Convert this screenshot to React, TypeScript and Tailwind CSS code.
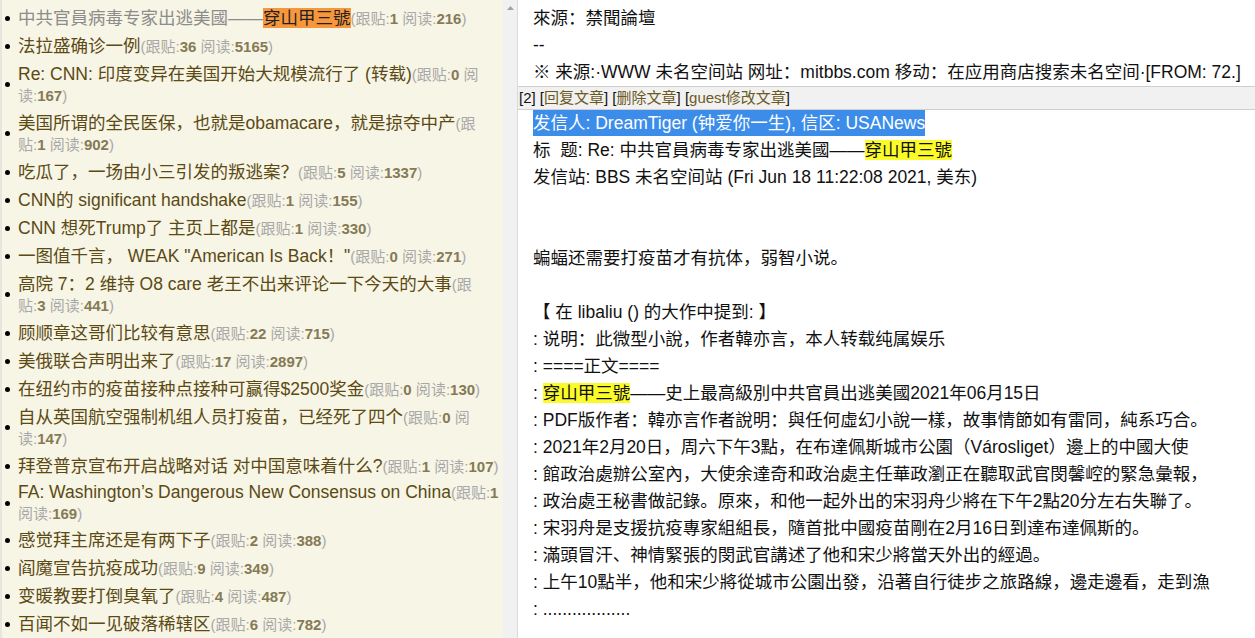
import React from "react";

type Brk = "none" | "gen" | "yue" | "num";
type Item = { title: React.ReactNode; a: string; b: string; brk?: Brk; visited?: boolean; tight?: boolean };

const items: Item[] = [
  {
    title: (
      <>
        中共官員病毒专家出逃美國——<span className="bg-[#f8963c] text-[#222]">穿山甲三號</span>
      </>
    ),
    a: "1",
    b: "216",
    visited: true,
  },
  { title: "法拉盛确诊一例", a: "36", b: "5165" },
  { title: "Re: CNN: 印度变异在美国开始大规模流行了 (转载)", a: "0", b: "167", brk: "yue" },
  { title: "美国所谓的全民医保，也就是obamacare，就是掠夺中产", a: "1", b: "902", brk: "gen" },
  { title: "吃瓜了，一场由小三引发的叛逃案？", a: "5", b: "1337" },
  { title: "CNN的 significant handshake", a: "1", b: "155" },
  { title: "CNN 想死Trump了 主页上都是", a: "1", b: "330" },
  { title: "一图值千言， WEAK \"American Is Back！\"", a: "0", b: "271" },
  { title: "高院 7：2 维持 O8 care 老王不出来评论一下今天的大事", a: "3", b: "441", brk: "gen" },
  { title: "顾顺章这哥们比较有意思", a: "22", b: "715" },
  { title: "美俄联合声明出来了", a: "17", b: "2897" },
  { title: "在纽约市的疫苗接种点接种可赢得$2500奖金", a: "0", b: "130" },
  { title: "自从英国航空强制机组人员打疫苗，已经死了四个", a: "0", b: "147", brk: "yue" },
  { title: "拜登普京宣布开启战略对话 对中国意味着什么?", a: "1", b: "107" },
  { title: "FA: Washington’s Dangerous New Consensus on China", a: "1", b: "169", brk: "num", tight: true },
  { title: "感觉拜主席还是有两下子", a: "2", b: "388" },
  { title: "阎魔宣告抗疫成功", a: "9", b: "349" },
  { title: "变暖教要打倒臭氧了", a: "4", b: "487" },
  { title: "百闻不如一见破落稀辖区", a: "6", b: "782" },
];

function Meta({ a, b, brk = "none" }: { a: string; b: string; brk?: Brk }) {
  const num = "font-bold text-[#857a55]";
  return (
    <span className="text-[15px] text-[#a8a8a8]">
      (跟{brk === "gen" && <br />}贴:<span className={num}>{a}</span>
      {brk === "num" ? <br /> : " "}阅{brk === "yue" && <br />}读:<span className={num}>{b}</span>)
    </span>
  );
}

const HL = ({ children }: { children: React.ReactNode }) => (
  <span className="bg-[#fbfb2a]">{children}</span>
);

const bodyLines: React.ReactNode[] = [
  "",
  "",
  "蝙蝠还需要打疫苗才有抗体，弱智小说。",
  "",
  "【 在 libaliu () 的大作中提到: 】",
  ": 说明：此微型小說，作者韓亦言，本人转载纯属娱乐",
  ": ====正文====",
  <>
    : <HL>穿山甲三號</HL>——史上最高級別中共官員出逃美國2021年06月15日
  </>,
  ": PDF版作者：韓亦言作者說明：與任何虛幻小說一樣，故事情節如有雷同，純系巧合。",
  ": 2021年2月20日，周六下午3點，在布達佩斯城市公園（Városliget）邊上的中國大使",
  ": 館政治處辦公室內，大使余達奇和政治處主任華政瀏正在聽取武官閔馨崆的緊急彙報，",
  ": 政治處王秘書做記錄。原來，和他一起外出的宋羽舟少將在下午2點20分左右失聯了。",
  ": 宋羽舟是支援抗疫專家組組長，隨首批中國疫苗剛在2月16日到達布達佩斯的。",
  ": 滿頭冒汗、神情緊張的閔武官講述了他和宋少將當天外出的經過。",
  ": 上午10點半，他和宋少將從城市公園出發，沿著自行徒步之旅路線，邊走邊看，走到漁",
  ": ..................",
];

export default function App() {
  return (
    <div
      className="flex h-[638px] w-[1255px] overflow-hidden bg-white"
      style={{ fontFamily: '"Liberation Sans", Arial, "Noto Sans CJK SC", sans-serif' }}
    >
      {/* Left list panel */}
      <div className="flex h-full w-[517px] shrink-0">
        <div className="h-full w-[503px] overflow-hidden border-l-2 border-[#e7e6dc] bg-[#f7f5e6] pt-[4px]">
          <ul>
            {items.map((it, i) => (
              <li key={i} className={`flex items-center ${it.tight ? "py-[2px]" : "py-[3.5px]"}`}>
                <span className="ml-[3px] mr-[8px] h-[5px] w-[5px] shrink-0 rounded-full bg-black" />
                <div
                  className={`whitespace-nowrap text-[17.5px] leading-[21px] ${
                    it.visited ? "text-[#8c8c8c]" : "text-[#5b4a14]"
                  }`}
                >
                  {it.title}
                  <Meta a={it.a} b={it.b} brk={it.brk} />
                </div>
              </li>
            ))}
          </ul>
        </div>
        {/* scrollbar */}
        <div className="flex h-full w-[14px] flex-col items-center bg-[#f1f1f1] pt-[6px]">
          <svg width="7" height="4" viewBox="0 0 7 4">
            <path d="M0 4 L3.5 0 L7 4 Z" fill="#a3a3a3" />
          </svg>
        </div>
      </div>

      {/* Right article panel */}
      <div className="h-full flex-1 overflow-hidden border-l border-[#dadada] text-[17.5px] leading-[27px] text-[#111]">
        <div className="whitespace-pre pl-[15px] pt-[5px]">
          <div>來源：禁聞論壇</div>
          <div>--</div>
          <div>※ 来源:·WWW 未名空间站 网址：mitbbs.com 移动：在应用商店搜索未名空间·[FROM: 72.]</div>
        </div>
        <div className="h-[24px] whitespace-nowrap border-y border-[#cfcfcf] bg-[#f1f1f1] pl-[1px] text-[15px] leading-[22px] text-[#111]">
          [2] [<span className="text-[#6b5a1e]">回复文章</span>] [
          <span className="text-[#6b5a1e]">删除文章</span>] [
          <span className="text-[#6b5a1e]">guest修改文章</span>]
        </div>
        <div className="whitespace-pre pl-[15px]">
          <div className="h-[27px]">
            <span className="inline-block h-[26px] bg-[#3b8de9] leading-[26px] text-white">
              发信人: DreamTiger (钟爱你一生), 信区: USANews
            </span>
          </div>
          <div>
            标  题: Re: 中共官員病毒专家出逃美國——<HL>穿山甲三號</HL>
          </div>
          <div>发信站: BBS 未名空间站 (Fri Jun 18 11:22:08 2021, 美东)</div>
          {bodyLines.map((l, i) => (
            <div key={i} className="h-[27px]">
              {l}
            </div>
          ))}
        </div>
      </div>
    </div>
  );
}
